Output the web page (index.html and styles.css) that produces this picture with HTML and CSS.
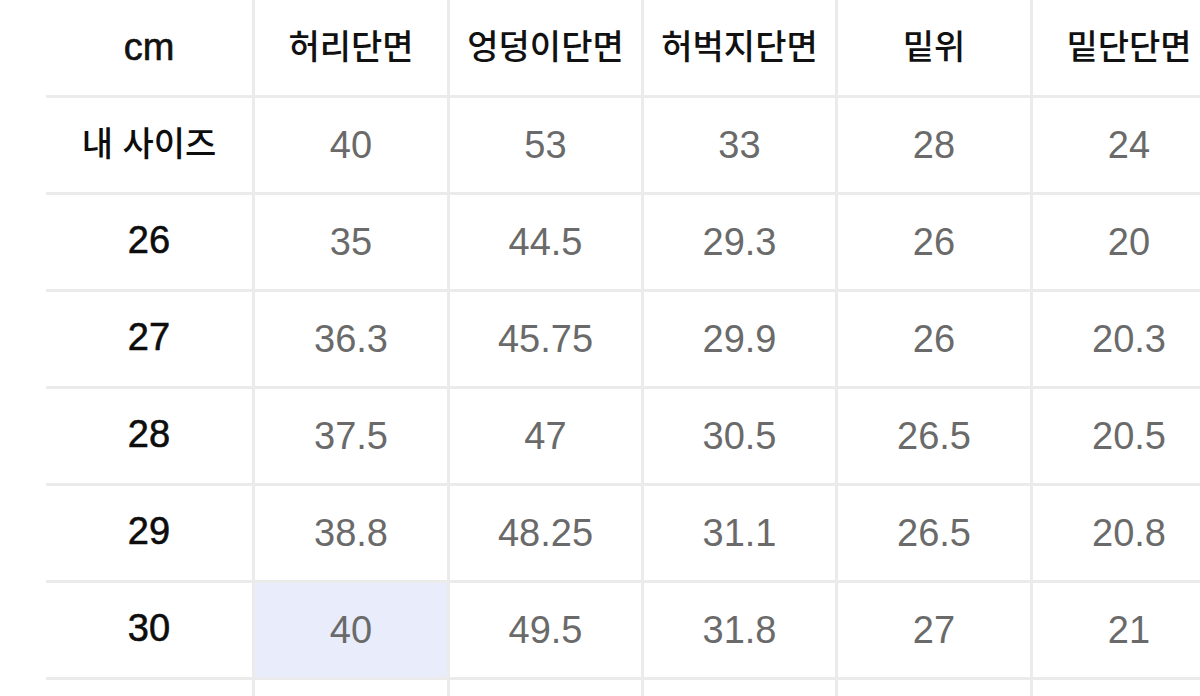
FILE: index.html
```html
<!DOCTYPE html>
<html lang="ko">
<head>
<meta charset="utf-8">
<link rel="stylesheet" href="styles.css">
</head>
<body>
<table class="size-table">
  <colgroup>
    <col class="c-label"><col class="c-a"><col class="c-b"><col class="c-b"><col class="c-a"><col class="c-a">
  </colgroup>
  <thead>
    <tr class="head">
      <th class="label cm">cm</th>
      <th>허리단면</th>
      <th>엉덩이단면</th>
      <th>허벅지단면</th>
      <th>밑위</th>
      <th>밑단단면</th>
    </tr>
  </thead>
  <tbody>
    <tr><th class="label ko">내 사이즈</th><td>40</td><td>53</td><td>33</td><td>28</td><td>24</td></tr>
    <tr><th class="label">26</th><td>35</td><td>44.5</td><td>29.3</td><td>26</td><td>20</td></tr>
    <tr><th class="label">27</th><td>36.3</td><td>45.75</td><td>29.9</td><td>26</td><td>20.3</td></tr>
    <tr><th class="label">28</th><td>37.5</td><td>47</td><td>30.5</td><td>26.5</td><td>20.5</td></tr>
    <tr><th class="label">29</th><td>38.8</td><td>48.25</td><td>31.1</td><td>26.5</td><td>20.8</td></tr>
    <tr><th class="label">30</th><td class="hl">40</td><td>49.5</td><td>31.8</td><td>27</td><td>21</td></tr>
    <tr><th class="label"></th><td></td><td></td><td></td><td></td><td></td></tr>
  </tbody>
</table>
</body>
</html>
```
FILE: styles.css
```css
html, body {
  margin: 0;
  padding: 0;
  background: #ffffff;
  overflow: hidden;
}
body {
  width: 1200px;
  height: 696px;
}
.size-table {
  margin-left: 46px;
  border-collapse: separate;
  border-spacing: 0;
  table-layout: fixed;
  width: 1181px;
}
.c-label { width: 209px; }
.c-a { width: 195px; }
.c-b { width: 194px; }

.size-table th,
.size-table td {
  box-sizing: border-box;
  padding: 0;
  text-align: center;
  vertical-align: middle;
  border-right: 3px solid #ebebeb;
  border-bottom: 3px solid #ebebeb;
  height: 97px;
  white-space: nowrap;
}
.head th {
  height: 98px;
  padding-bottom: 6px;
  font-family: "Noto Sans CJK KR", "Noto Sans", sans-serif;
  font-weight: 500;
  font-size: 34px;
  color: #111111;
}
.head th.cm {
  font-family: "Liberation Sans", Arial, sans-serif;
  font-weight: 400;
  font-size: 38px;
  padding-bottom: 0;
  -webkit-text-stroke: 0.6px #111111;
}
tbody th.label {
  font-family: "Liberation Sans", Arial, sans-serif;
  font-weight: 400;
  font-size: 38px;
  color: #0d0d0d;
  -webkit-text-stroke: 0.6px #0d0d0d;
  padding-bottom: 3px;
}
tbody th.label.ko {
  font-family: "Noto Sans CJK KR", "Noto Sans", sans-serif;
  font-weight: 500;
  font-size: 34px;
  -webkit-text-stroke: 0;
  padding-bottom: 8px;
}
tbody td {
  font-family: "Liberation Sans", Arial, sans-serif;
  font-size: 38px;
  color: #6a6a6a;
  padding-bottom: 13px;
}
tbody td.hl {
  background: #e8ecfb;
}
```
